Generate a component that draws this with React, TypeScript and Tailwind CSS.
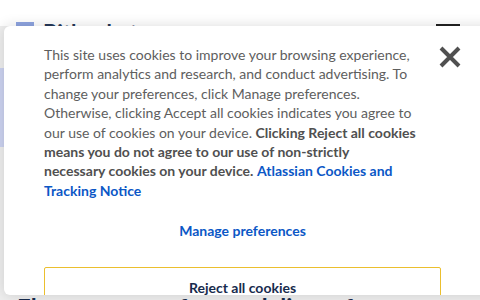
import React from "react";

export default function App() {
  const font = { fontFamily: "Lato, 'Noto Sans', sans-serif" };
  return (
    <div className="relative w-[480px] h-[300px] overflow-hidden bg-white" style={font}>
      {/* background page */}
      <div className="flex flex-col h-full">
        <div className="h-[26px] flex items-end justify-between pl-[16px] pr-[20px] bg-white">
          <div className="flex items-end gap-[9px]">
            <div className="w-[18px] h-[4px] bg-[#8ea4e0]" />
            <div className="text-[22px] leading-none font-bold text-[#253858] h-[4px] overflow-visible">Bitbucket</div>
          </div>
          <div className="w-[24px] h-[2px] bg-[#222]" />
        </div>
        <div className="flex-1 bg-[#eeeeee] flex flex-col">
          <div className="h-[42px]" />
          <div className="h-[79px] w-[10px] bg-[#ccd3f1]" />
          <div className="flex-1" />
          <div className="pl-[17px] text-[24px] leading-none font-bold text-[#172b4d] h-[4px]">
            Elevate your software delivery from planning to
          </div>
        </div>
      </div>

      {/* modal */}
      <div className="absolute left-[4px] top-[26px] w-[520px] h-[269px] bg-white rounded-[6px] shadow-[0_0_14px_rgba(0,0,0,0.14)] overflow-hidden">
        <button className="absolute left-[435px] top-[20px] w-[22px] h-[22px] flex items-center justify-center">
          <svg width="22" height="22" viewBox="0 0 22 22">
            <path d="M2 2 L20 20 M20 2 L2 20" stroke="#505050" strokeWidth="4" strokeLinecap="butt" />
          </svg>
        </button>
        <div className="pl-[40px] pt-[19px] w-[437px]">
          <p className="text-[14px] leading-[19.4px] text-[#5e5e5e]">
            This site uses cookies to improve your browsing experience,<br />
            perform analytics and research, and conduct advertising. To<br />
            change your preferences, click Manage preferences.<br />
            Otherwise, clicking Accept all cookies indicates you agree to<br />
            our use of cookies on your device.{" "}
            <b className="font-bold text-[#505050]">Clicking Reject all cookies<br />
            means you do not agree to our use of non-strictly<br />
            necessary cookies on your device.</b>{" "}
            <a className="font-bold text-[#0b57c6]">Atlassian Cookies and<br />Tracking Notice</a>
          </p>
          <div className="mt-[20px] h-[21px] flex items-center justify-center text-[14px] font-bold text-[#0b57c6]">
            Manage preferences
          </div>
          <div className="mt-[26px] h-[42px] border border-[#ebbf2e] rounded-[2px] flex items-start justify-center pt-[10px] text-[14px] leading-[19px] font-bold text-[#172b4d]">
            Reject all cookies
          </div>
        </div>
      </div>
    </div>
  );
}
